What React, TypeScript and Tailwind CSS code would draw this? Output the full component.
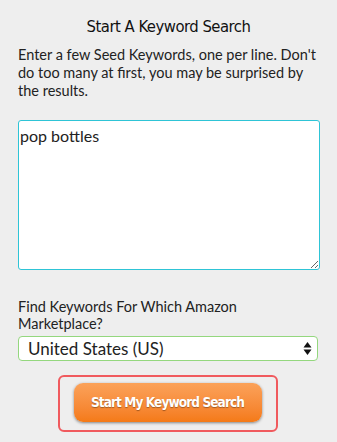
import React from 'react';

const lato = { fontFamily: 'Lato, "Noto Sans", sans-serif' };

export default function App() {
  return (
    <div className="w-[337px] h-[442px] bg-[#eeeeee] text-[#222] overflow-hidden" style={lato}>
      <div className="px-[18px] pt-[16px] flex flex-col">
        <h2 className="text-center text-[16.5px] leading-[22px] tracking-[-0.5px] text-[#111] [font-family:'DejaVu_Sans_Condensed',sans-serif]">
          Start A Keyword Search
        </h2>
        <p className="mt-[8px] text-[14.5px] leading-[18px] text-[#222]">
          Enter a few Seed Keywords, one per line. Don't do too many at first, you may be surprised by the results.
        </p>
        <textarea
          defaultValue="pop bottles"
          className="mt-[20px] h-[150px] w-[302px] bg-white border border-[#2ec4d6] rounded-[3px] px-[1px] py-[5px] text-[16px] leading-[20px] text-[#222] outline-none resize-y"
        />
        <p className="mt-[28px] text-[14.5px] leading-[17px] text-[#222]">
          Find Keywords For Which Amazon Marketplace?
        </p>
        <div className="mt-[4px] h-[25px] w-[300px] bg-white border border-[#94d77e] rounded-[4px] flex items-center justify-between pl-[9px] pr-[5px]">
          <span className="text-[17px] leading-[20px] text-[#222]">United States (US)</span>
          <svg width="9" height="15" viewBox="0 0 9 15">
            <path d="M4.5 1 L8.5 6.5 L0.5 6.5 Z" fill="#111" />
            <path d="M4.5 14 L8.5 8.5 L0.5 8.5 Z" fill="#111" />
          </svg>
        </div>
        <div className="mt-[14px] flex justify-center">
          <div className="ml-[-2px] w-[220px] h-[57px] border-2 border-[#f05a5e] rounded-[6px] flex items-center justify-center">
            <button className="mt-[-3px] w-[188px] h-[39px] rounded-[9px] bg-gradient-to-b from-[#fba259] to-[#f47a16] shadow-[0_1px_3px_rgba(0,0,0,0.45)] text-white text-[13.5px] tracking-[-0.9px] font-bold whitespace-nowrap [text-shadow:0_1px_1px_rgba(0,0,0,0.35)] [font-family:'DejaVu_Sans_Condensed',sans-serif]">
              Start My Keyword Search
            </button>
          </div>
        </div>
      </div>
    </div>
  );
}
